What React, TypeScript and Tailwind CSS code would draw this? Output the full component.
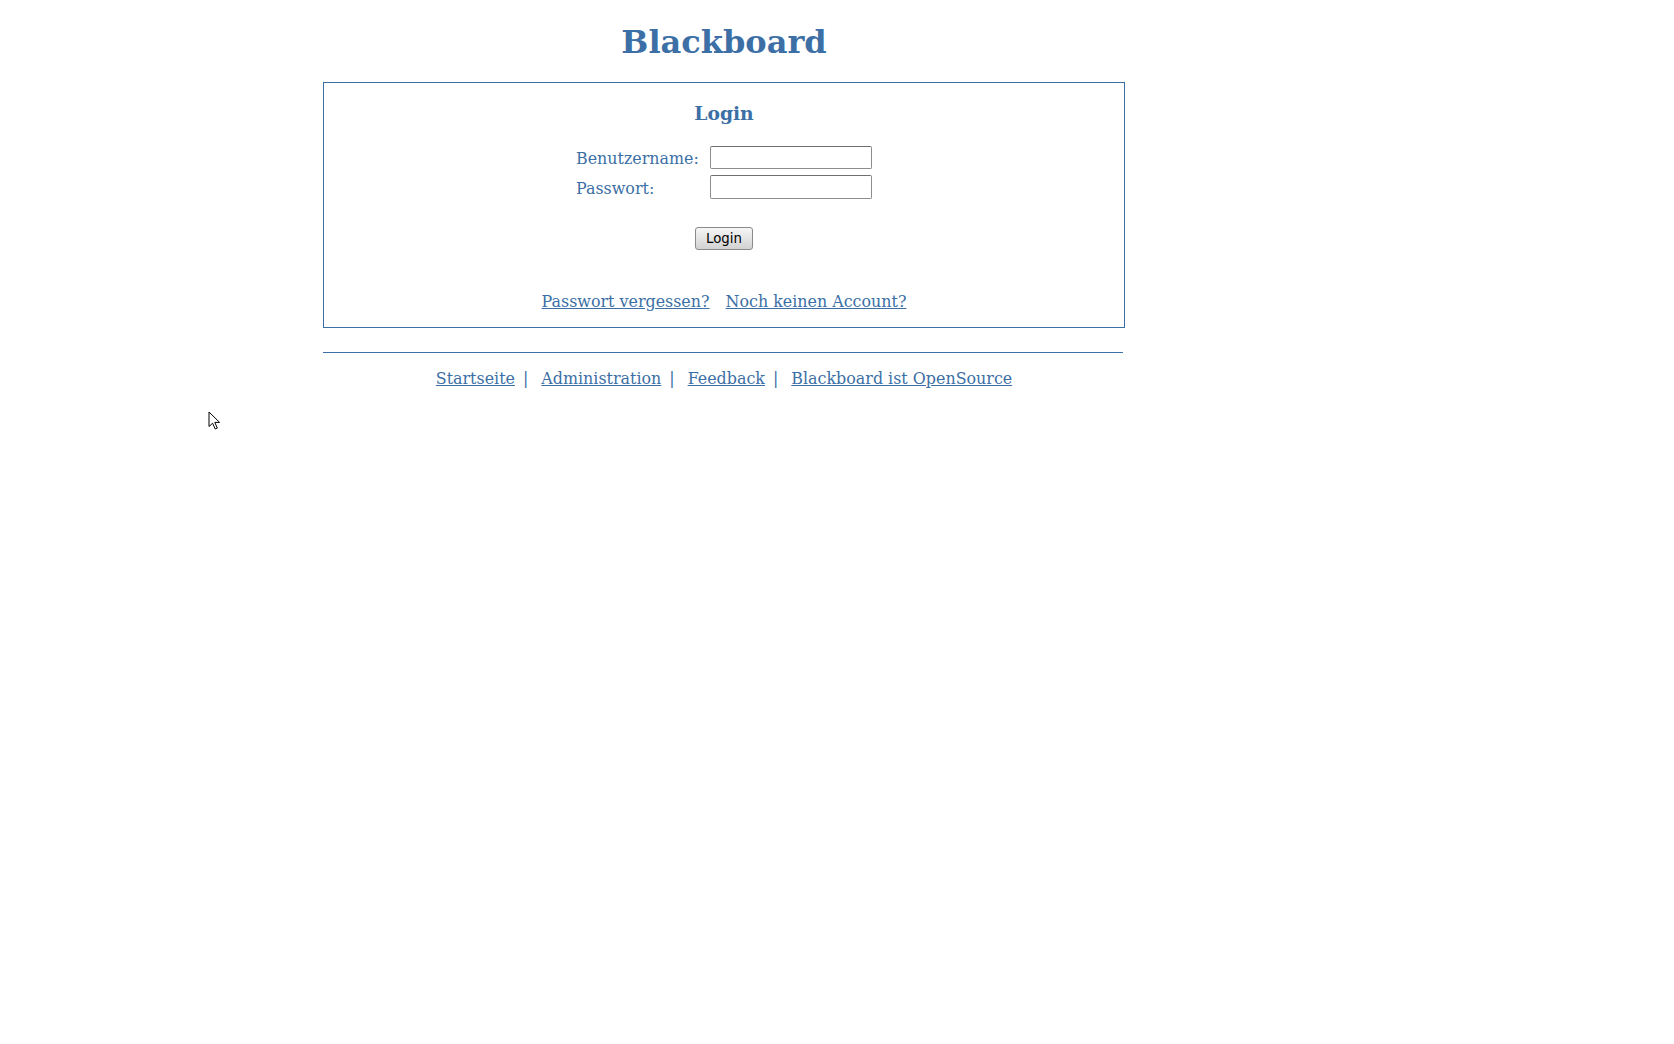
import React from 'react';

const footerLinks = ['Startseite', 'Administration', 'Feedback', 'Blackboard ist OpenSource'];

export default function App() {
  return (
    <div className="relative min-h-screen bg-white text-[#3c6fa5] font-['DejaVu_Serif','Liberation_Serif',serif]">
      <div className="ml-[323px] w-[802px]">
        {/* Title */}
        <h1 className="pt-[24px] text-center text-[32px] font-bold leading-[37px]">Blackboard</h1>

        {/* Login box */}
        <div className="mt-[21px] h-[246px] border border-[#3c6fa5] flex flex-col items-center">
          <h3 className="mt-[19px] text-[18.72px] font-bold leading-[22px]">Login</h3>

          <div className="mt-[22px] grid grid-cols-[134px_162px] gap-y-[6px] items-center text-[15.9px] leading-[19px]">
            <label className="pt-[2px]">Benutzername:</label>
            <input
              type="text"
              className="h-[23px] w-[162px] rounded-[2px] border border-[#8d8d8d] border-t-[#6f6f6f] bg-white outline-none"
            />
            <label className="pt-[2px]">Passwort:</label>
            <input
              type="password"
              className="h-[24px] w-[162px] rounded-[2px] border border-[#8d8d8d] border-t-[#6f6f6f] bg-white outline-none"
            />
          </div>

          <button className="mt-[28px] h-[23px] w-[58px] rounded-[3px] border border-[#8a8a8a] bg-gradient-to-b from-[#f6f6f6] to-[#d2d2d2] font-['DejaVu_Sans',sans-serif] text-[13.333px] leading-[16px] text-black">
            Login
          </button>

          <div className="mt-[42px] flex gap-[16px] text-[15.9px] leading-[19px]">
            <a href="#" className="underline">Passwort vergessen?</a>
            <a href="#" className="underline">Noch keinen Account?</a>
          </div>
        </div>

        {/* Footer */}
        <div className="mt-[24px] h-px w-[800px] bg-[#3c6fa5]" />
        <div className="mt-[16px] flex justify-center text-[15.9px] leading-[19px]">
          {footerLinks.map((link, i) => (
            <React.Fragment key={link}>
              <a href="#" className="underline">{link}</a>
              {i < footerLinks.length - 1 && <span className="ml-[8px] mr-[13px]">|</span>}
            </React.Fragment>
          ))}
        </div>
      </div>

      {/* Mouse pointer */}
      <svg className="absolute left-[208px] top-[411px]" width="13" height="20" viewBox="0 0 13 20">
        <path d="M1 1 L1 15.5 L4.6 12.2 L7.2 18 L9.3 17.1 L6.8 11.4 L11.6 11.4 Z" fill="white" stroke="black" strokeWidth="1" strokeLinejoin="miter" />
      </svg>
    </div>
  );
}
